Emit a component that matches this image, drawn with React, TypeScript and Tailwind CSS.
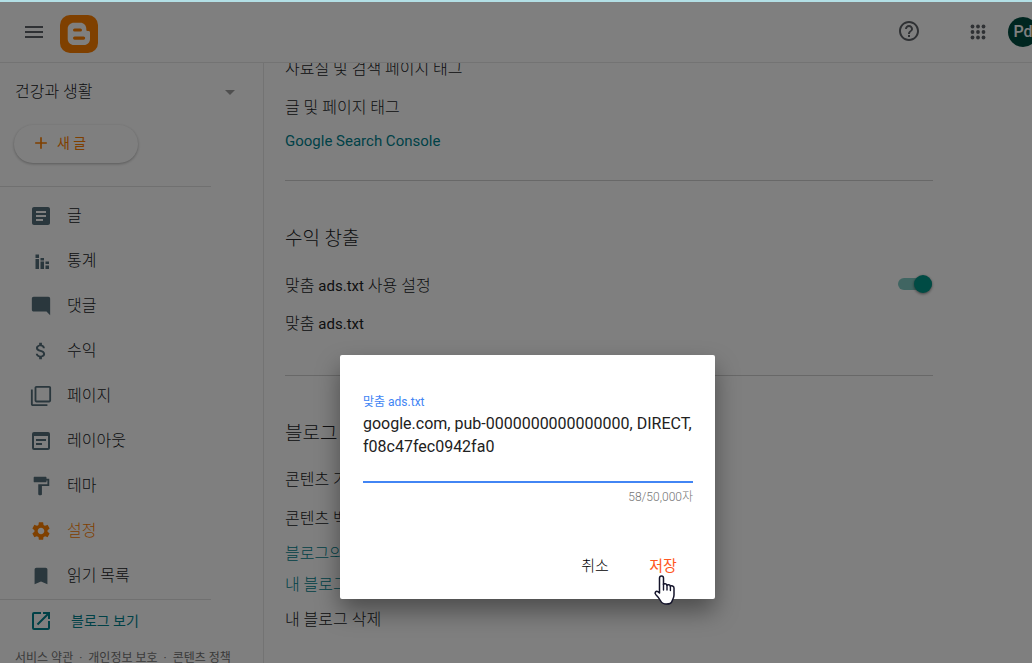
import type { ReactNode } from 'react';
import {
  MdAdd,
  MdArrowDropDown,
  MdArticle,
  MdAttachMoney,
  MdBookmark,
  MdFilterNone,
  MdFormatPaint,
  MdHelpOutline,
  MdMenu,
  MdModeComment,
  MdOpenInNew,
  MdOutlineWysiwyg,
  MdSettings,
} from 'react-icons/md';

function BloggerLogo() {
  return (
    <svg viewBox="0 0 38 38" className="size-[38px]" aria-hidden="true">
      <rect width="38" height="38" rx="10" fill="#ff8000" />
      <path
        fill="#fff"
        d="M14 7.700h6.300c3.400 0 6 2.600 6 6v1c0 .8.400 1.200 1.100 1.200h1.200c.8 0 1.400.6 1.400 1.400V24c0 3.400-2.600 6-6 6H14c-3.500 0-6.300-2.600-6.300-6V13.700c0-3.400 2.800-6 6.300-6z"
      />
      <path d="M14.600 15h5.800M14.600 23.100h9" stroke="#ff8000" strokeWidth="3.200" strokeLinecap="round" />
    </svg>
  );
}

function StatsIcon() {
  return (
    <svg viewBox="0 0 20 20" className="size-5" fill="currentColor" aria-hidden="true">
      <path d="M4.500 3.500H8v3.500H4.500zM4.500 8H8v10H4.500zM9.500 7H13v2.500H9.500zM9.500 10.500H13V18H9.500zM14.500 10.500H18v2.500h-3.500zM14.500 14.500H18V18h-3.500z" />
    </svg>
  );
}

function AppsIcon() {
  return (
    <svg viewBox="0 0 16 16" className="size-4" fill="currentColor" aria-hidden="true">
      {[2.5, 8, 13.5].map((y) => [2.5, 8, 13.5].map((x) => <circle key={`${x}-${y}`} cx={x} cy={y} r="1.9" />))}
    </svg>
  );
}

function HandCursor() {
  return (
    <svg viewBox="0 0 24 32" className="h-8 w-6" aria-hidden="true">
      <path
        d="M6.500 4.200c0-2.900 4-2.900 4 0v6.300c.4-1 3.200-1 3.500.8.600-1 3.200-.7 3.400 1 .9-.9 3.600-.4 3.600 1.800V21c0 3-1.500 4.500-2 6.200-.5 1.800-2.500 2.800-5.500 2.800-3.500 0-4.800-1-5.800-3-1.200-2.300-2.500-4-4.800-6.200-2-2 .2-4.200 2-3.200l1.600 1.400z"
        fill="#fff"
        stroke="#14142b"
        strokeWidth="1.500"
        strokeLinejoin="round"
      />
      <path d="M10.500 10v6M14 11.500V16M17.400 12.500V16.500" stroke="#14142b" strokeWidth="1.400" strokeLinecap="round" />
    </svg>
  );
}

const navItems: { label: string; icon: ReactNode; active?: boolean }[] = [
  { label: '글', icon: <MdArticle className="size-6" /> },
  { label: '통계', icon: <StatsIcon /> },
  { label: '댓글', icon: <MdModeComment className="size-[22px]" /> },
  { label: '수익', icon: <MdAttachMoney className="size-[22px]" /> },
  { label: '페이지', icon: <MdFilterNone className="size-[22px]" /> },
  { label: '레이아웃', icon: <MdOutlineWysiwyg className="size-6" /> },
  { label: '테마', icon: <MdFormatPaint className="size-[22px]" /> },
  { label: '설정', icon: <MdSettings className="size-[22px]" />, active: true },
  { label: '읽기 목록', icon: <MdBookmark className="size-[22px]" /> },
];

function Header() {
  return (
    <header className="flex h-[61px] shrink-0 items-center justify-between border-b border-[#e6e6e6] pl-[22px]">
      <div className="flex items-center gap-[14px]">
        <button type="button" aria-label="기본 메뉴" className="text-[#5f6368]">
          <MdMenu className="size-6" />
        </button>
        <a href="#home" aria-label="Blogger" className="mt-1">
          <BloggerLogo />
        </a>
      </div>
      <div className="flex items-center">
        <button type="button" aria-label="도움말" className="mb-0.5 mr-[49px] text-[#5f6368]">
          <MdHelpOutline className="size-6" />
        </button>
        <button type="button" aria-label="Google 앱" className="mr-[22px] text-[#5f6368]">
          <AppsIcon />
        </button>
        <button type="button" aria-label="계정" className="w-6 overflow-hidden">
          <span className="flex size-[30px] items-center justify-center rounded-full bg-[#004d40] text-base font-medium text-white">
            Pd
          </span>
        </button>
      </div>
    </header>
  );
}

function Sidebar() {
  return (
    <aside className="flex w-[264px] shrink-0 flex-col overflow-hidden border-r border-[#e6e6e6]">
      <button
        type="button"
        className="mt-[17px] flex h-6 shrink-0 items-center justify-between pl-[15px] pr-[21px] text-base font-light text-[#202124]"
      >
        건강과 생활
        <MdArrowDropDown className="size-6 text-[#9e9e9e]" />
      </button>
      <button
        type="button"
        className="ml-[14px] mt-[21px] flex h-[38px] w-[124px] shrink-0 items-center gap-1.5 rounded-full pb-0.5 pl-[17px] text-sm text-[#ff8000] shadow-[0_1px_3px_rgba(0,0,0,0.3)]"
      >
        <MdAdd className="size-5" />
        새 글
      </button>
      <nav className="mt-[23px] w-[211px] border-y border-[#e0e0e0] pb-px pt-[6px]">
        {navItems.map((item) => (
          <a
            key={item.label}
            href={`#${item.label}`}
            className={
              item.active
                ? 'flex h-[45px] items-center gap-[14px] pl-[29px] text-base font-light text-[#ff8000]'
                : 'flex h-[45px] items-center gap-[14px] pl-[29px] text-base font-light text-[#202124]'
            }
          >
            <span
              className={
                item.active ? 'flex w-6 justify-center' : 'flex w-6 justify-center text-[#546e7a]'
              }
            >
              {item.icon}
            </span>
            {item.label}
          </a>
        ))}
      </nav>
      <a href="#view" className="mt-[9px] flex h-6 shrink-0 items-center gap-[18px] pl-[29px] text-sm text-[#00838f]">
        <MdOpenInNew className="size-6" />
        블로그 보기
      </a>
      <footer className="mt-[15px] flex h-5 shrink-0 items-center gap-1.5 pl-[15px] text-xs text-[#757575]">
        <a href="#terms">서비스 약관</a>·<a href="#privacy">개인정보 보호</a>·<a href="#policy">콘텐츠 정책</a>
      </footer>
    </aside>
  );
}

function Settings() {
  return (
    <main className="min-w-0 grow overflow-hidden pl-[21px] pr-[99px] font-light leading-6 text-[#202124]">
      <section className="-mt-[6px] border-b border-[#d0d0d0] pb-[27px]">
        <p>사료실 및 검색 페이지 태그</p>
        <p className="mt-[15px]">글 및 페이지 태그</p>
        <a href="#console" className="mt-[9px] block text-[15px] font-normal text-[#00838f]">
          Google Search Console
        </a>
      </section>
      <section className="border-b border-[#d0d0d0] pb-[39px] pt-[46px]">
        <h2 className="text-[19px] leading-6">수익 창출</h2>
        <div className="mt-[23px] flex items-center justify-between">
          <label htmlFor="ads">
            맞춤 <span className="text-[15px] font-normal">ads.txt</span> 사용 설정
          </label>
          <input
            id="ads"
            type="checkbox"
            role="switch"
            defaultChecked
            className="mb-1 mr-px flex h-3 w-[34px] appearance-none items-center justify-end rounded-full bg-[#80cbc4] before:size-[18px] before:shrink-0 before:rounded-full before:bg-[#009688] before:shadow-[0_1px_3px_rgba(0,0,0,0.5)]"
          />
        </div>
        <p className="mt-[14px]">
          맞춤 <span className="text-[15px] font-normal">ads.txt</span>
        </p>
      </section>
      <section className="pt-[46px]">
        <h2 className="text-[19px] leading-6">블로그 관리</h2>
        <p className="mt-[22px]">콘텐츠 가져오기</p>
        <p className="mt-[15px]">콘텐츠 백업</p>
        <a href="#videos" className="mt-[11px] block text-[#00838f]">
          블로그의 동영상
        </a>
        <a href="#remove" className="mt-[7px] block text-[#00838f]">
          내 블로그 삭제
        </a>
        <p className="mt-[11px]">내 블로그 삭제</p>
      </section>
    </main>
  );
}

function AdsDialog() {
  return (
    <div className="absolute inset-0 flex items-start justify-center overflow-hidden bg-black/50 pl-[23px] pt-[353px]">
      <div
        role="dialog"
        aria-modal="true"
        aria-label="맞춤 ads.txt"
        className="w-[375px] rounded-xs bg-white pb-4 pl-[23px] pr-[22px] pt-[38px] shadow-[0_12px_24px_rgba(0,0,0,0.4)]"
      >
        <label htmlFor="adstxt" className="block text-xs leading-[19px] text-[#4285f4]">
          맞춤 ads.txt
        </label>
        <textarea
          id="adstxt"
          defaultValue="google.com, pub-0000000000000000, DIRECT, f08c47fec0942fa0"
          spellCheck={false}
          className="block h-[71px] w-full resize-none overflow-hidden border-b-2 border-[#4285f4] text-base leading-[23px] text-[#212121] outline-none"
        />
        <p className="mt-[5px] text-right text-xs font-light leading-[18px] text-[#757575]">58/50,000자</p>
        <div className="mt-[43px] flex justify-end gap-2 text-[15px]">
          <button type="button" className="h-[34px] w-[60px] font-light text-[#000000]">
            취소
          </button>
          <button type="button" className="relative h-[34px] w-[60px] text-[#ff5722]">
            저장
            <span className="absolute left-[20px] top-[25px]">
              <HandCursor />
            </span>
          </button>
        </div>
      </div>
    </div>
  );
}

export default function App() {
  return (
    <div className="flex h-screen flex-col overflow-hidden border-t-2 border-[#b2dfe5] bg-white font-['Roboto','Noto_Sans_CJK_KR',sans-serif]">
      <div className="relative flex min-h-0 grow flex-col">
        <Header />
        <div className="flex min-h-0 grow">
          <Sidebar />
          <Settings />
        </div>
        <AdsDialog />
      </div>
    </div>
  );
}
